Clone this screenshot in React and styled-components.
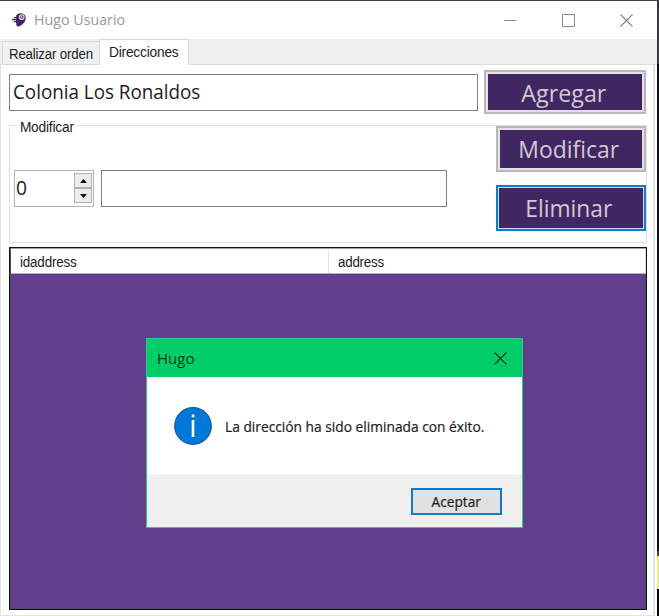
import React from "react";
import styled, { createGlobalStyle } from "styled-components";

const Global = createGlobalStyle`
  * { box-sizing: border-box; }
  html, body { margin: 0; padding: 0; background: #202024; overflow: hidden; }
`;

const ui = `"Open Sans", "Noto Sans", sans-serif`;
const classic = `"Liberation Sans", Arial, sans-serif`;

const Screen = styled.div`
  width: 659px;
  height: 616px;
  display: grid;
  grid-template-columns: 657px 2px;
  border-top: 1px solid #424044;
  overflow: hidden;
`;

const Backdrop = styled.div`
  background: linear-gradient(#38383c 0 63px, #111115 63px 550px, #4a4a38 550px 555px, #e9ee86 555px 588px, #050505 588px);
`;

const Window = styled.div`
  display: flex;
  flex-direction: column;
  background: #fff;
`;

const TitleBar = styled.header`
  height: 38px;
  display: flex;
  align-items: center;
  padding: 0 24px 0 11px;
`;

const Text = styled.span`
  display: block;
  white-space: nowrap;
  line-height: 1;
  font-family: ${(p) => (p.$classic ? classic : ui)};
  font-size: ${(p) => p.$size}px;
  letter-spacing: ${(p) => p.$track || 0}px;
  color: ${(p) => p.$color || "#1c1c1c"};
  transform: scaleX(${(p) => p.$fit || 1});
  transform-origin: ${(p) => (p.$center ? "center" : "left")};
`;

const Caption = styled(Text)`
  flex: 1;
  margin: -1px 0 0 7px;
`;

const Controls = styled.div`
  display: flex;
  gap: 45px;
`;

const TabStrip = styled.nav`
  height: 26px;
  flex: none;
  display: flex;
  align-items: flex-end;
  padding-left: 2px;
  background: #efefef;
  box-shadow: inset 0 -1px #dcdcdc;
`;

const Tab = styled.div`
  height: ${(p) => (p.$active ? 26 : 24)}px;
  width: ${(p) => (p.$active ? 90 : 97)}px;
  padding: ${(p) => (p.$active ? "5px 0 0 9px" : "5px 0 0 6px")};
  border: 1px solid #d9d9d9;
  border-bottom-color: ${(p) => (p.$active ? "#fff" : "#d9d9d9")};
  border-right-width: ${(p) => (p.$active ? 1 : 0)}px;
  background: ${(p) => (p.$active ? "#fff" : "#f0f0f0")};
`;

const Page = styled.main`
  height: 551px;
  margin-right: 2px;
  padding: 5px 6px 0 8px;
  border: solid #e2e2e2;
  border-width: 0 2px 1px 1px;
`;

const AddRow = styled.div`
  display: flex;
  align-items: center;
  justify-content: space-between;
  height: 44px;
  padding-right: 1px;
`;

const Field = styled.div`
  width: ${(p) => p.$width}px;
  height: ${(p) => p.$height}px;
  display: flex;
  align-items: center;
  padding: 0 0 1px 3px;
  border: 1px solid #7f7f7f;
  background: #fff;
`;

const PurpleButton = styled.button`
  width: ${(p) => p.$width}px;
  height: ${(p) => p.$height}px;
  display: flex;
  align-items: center;
  justify-content: center;
  padding: ${(p) => (p.$height === 46 ? "0 4px 1px 0" : "1px 3px 0 0")};
  border: 2px solid ${(p) => (p.$focused ? "#1079d3" : "#b9b7ba")};
  box-shadow: inset 0 0 0 ${(p) => (p.$focused ? "1px #d9d9ea" : "2px #e2e0e5")};
  background: #412664;
  border-radius: 0;
`;

const Group = styled.fieldset`
  height: 123px;
  width: 638px;
  margin: 6px 0 0;
  padding: 0 1px 0 4px;
  border: 1px solid #dfdfdf;
  border-top: 0;
  min-width: 0;
  display: flex;
  flex-direction: column;
  background: linear-gradient(#dfdfdf, #dfdfdf) 0 5px / 7px 1px no-repeat,
    linear-gradient(#dfdfdf, #dfdfdf) 67px 5px / 569px 1px no-repeat;
  clip-path: polygon(0 5px, 6px 5px, 6px 0, 80px 0, 80px 5px, 100% 5px, 100% 100%, 0 100%);
`;

const GroupBody = styled.div`
  display: grid;
  grid-template-columns: 80px 346px 150px;
  column-gap: 7px;
  width: 632px;
  padding-top: 6px;
  & > :last-child { margin-left: 42px; }
`;

const GroupTitle = styled(Text)`
  height: 0;
  padding-left: 6px;
`;

const Spinner = styled.div`
  width: 80px;
  height: 37px;
  margin-top: 44px;
  display: flex;
  align-items: center;
  justify-content: space-between;
  padding: 0 2px;
  border: 1px solid #b4b4b4;
`;

const SpinnerValue = styled(Text)`
  margin: -2px 0 0 -1px;
`;

const Steps = styled.div`
  width: 18px;
  display: grid;
  grid-template-rows: 15px 15px;
  margin: 0 -1px 1px 0;
`;

const Step = styled.div`
  display: grid;
  place-items: center;
  border: 1px solid #b0b0b0;
  background: #ededed;
`;

const Offset = styled.div`
  margin-top: 44px;
`;

const Stack = styled.div`
  display: flex;
  flex-direction: column;
  gap: 13px;
`;

const Table = styled.section`
  width: 638px;
  height: 363px;
  margin-top: 4px;
  border: 1px solid #111;
  background: #623f8d;
  box-shadow: inset 0 0 0 1px #55466b;
`;

const HeadRow = styled.div`
  display: grid;
  grid-template-columns: 318px 1fr;
  height: 26px;
  margin: 0 0 0 1px;
  border-top: 1px solid #a0a0a0;
  border-bottom: 1px solid #b5b0ba;
  background: #fff;
`;

const HeadCell = styled.div`
  display: flex;
  align-items: center;
  padding: 1px 0 0 9px;
  border-right: 1px solid #e3e3e3;
`;

const Dialog = styled.div`
  position: absolute;
  left: 146px;
  top: 338px;
  width: 377px;
  height: 190px;
  display: grid;
  grid-template-rows: 38px 97px 1fr;
  border: 1px solid #2fc888;
  background: #fff;
`;

const DialogTitle = styled.div`
  display: flex;
  align-items: center;
  justify-content: space-between;
  padding: 0 15px 0 10px;
  background: #02ce68;
`;

const DialogBody = styled.div`
  display: flex;
  align-items: center;
  gap: 13px;
  padding: 0 0 0 27px;
`;

const Message = styled(Text)`
  margin-top: 3px;
  -webkit-text-stroke: 0.2px #1c1c1c;
`;

const DialogFooter = styled.div`
  display: flex;
  justify-content: flex-end;
  align-items: center;
  padding: 2px 20px 0 0;
  background: #efefef;
`;

const Accept = styled.button`
  width: 91px;
  height: 27px;
  display: grid;
  place-items: center;
  padding: 0;
  border: 2px solid #1279cf;
  background: #e1e1e1;
`;

const AcceptLabel = styled(Text)`
  margin-top: 1px;
  -webkit-text-stroke: 0.2px #1c1c1c;
`;

const Cross = ({ color }) => (
  <svg width="13" height="13" viewBox="0 0 13 13" stroke={color} strokeWidth="1.1">
    <path d="M.5 .5 12.5 12.5M12.5 .5 .5 12.5" />
  </svg>
);

const Logo = () => (
  <svg width="16" height="16" viewBox="0 0 16 16">
    <path d="M5.2 3.6Q6.6 1.2 10 1.2 14.6 1.6 14.7 6 14.4 10.4 10.6 13 8.4 14.6 6.2 14.6 5 13 5 10Z" fill="#402562" />
    <path d="M2.6 5.7H5.6M1 7.6H5.6M2.8 9.6H5.6" stroke="#402562" strokeWidth="1.2" />
    <circle cx="10.7" cy="5.1" r="2.3" fill="#5c427b" stroke="#e4dcec" strokeWidth="1.1" />
    <circle cx="10.5" cy="5" r=".7" fill="#fff" />
  </svg>
);

const Arrow = ({ down }) => (
  <svg width="7" height="4" viewBox="0 0 7 4">
    <path d={down ? "M0 0H7L3.5 4Z" : "M0 4H7L3.5 0Z"} fill="#111" />
  </svg>
);

export default function App() {
  return (
    <>
      <Global />
      <Screen>
        <Window>
          <TitleBar>
            <Logo />
            <Caption $size={15} $fit={0.95} $color="#999">Hugo Usuario</Caption>
            <Controls>
              <svg width="13" height="13"><path d="M0 6.5H12" stroke="#8a8a8a" /></svg>
              <svg width="13" height="13"><path d="M.5 .5H12.5V12.5H.5Z" fill="none" stroke="#8a8a8a" /></svg>
              <Cross color="#858585" />
            </Controls>
          </TitleBar>
          <TabStrip>
            <Tab><Text $classic $size={14} $track={-0.2} $fit={0.95}>Realizar orden</Text></Tab>
            <Tab $active><Text $classic $size={14} $track={-0.2} $fit={0.98}>Direcciones</Text></Tab>
          </TabStrip>
          <Page>
            <AddRow>
              <Field $width={469} $height={37}><Text $size={20} $fit={0.94}>Colonia Los Ronaldos</Text></Field>
              <PurpleButton $width={162} $height={44}><Text $center $size={24} $fit={0.97} $color="#d3cad1">Agregar</Text></PurpleButton>
            </AddRow>
            <Group>
              <GroupTitle $classic $size={14} $track={-0.2} $fit={0.98}>Modificar</GroupTitle>
              <GroupBody>
                <Spinner>
                  <SpinnerValue $size={20} $fit={0.96}>0</SpinnerValue>
                  <Steps><Step><Arrow /></Step><Step><Arrow down /></Step></Steps>
                </Spinner>
                <Offset><Field $width={346} $height={37} /></Offset>
                <Stack>
                  <PurpleButton $width={150} $height={46}><Text $center $size={24} $fit={0.955} $color="#d3cad1">Modificar</Text></PurpleButton>
                  <PurpleButton $width={150} $height={46} $focused><Text $center $size={24} $fit={0.95} $color="#d3cad1">Eliminar</Text></PurpleButton>
                </Stack>
              </GroupBody>
            </Group>
            <Table>
              <HeadRow>
                <HeadCell><Text $classic $size={14} $track={-0.2} $fit={0.96}>idaddress</Text></HeadCell>
                <HeadCell><Text $classic $size={14} $track={-0.2} $fit={0.95}>address</Text></HeadCell>
              </HeadRow>
            </Table>
          </Page>
        </Window>
        <Backdrop />
      </Screen>
      <Dialog>
        <DialogTitle><Text $size={15} $color="#06351d">Hugo</Text><Cross color="#06301a" /></DialogTitle>
        <DialogBody>
          <svg width="38" height="38" viewBox="0 0 38 38">
            <circle cx="19" cy="19" r="18.3" fill="#0078d7" stroke="#135f9f" strokeWidth="1.2" />
            <path d="M19 13V30M19 7.5V10.3" stroke="#fff" strokeWidth="2.6" />
          </svg>
          <Message $size={14} $fit={0.983}>La dirección ha sido eliminada con éxito.</Message>
        </DialogBody>
        <DialogFooter><Accept><AcceptLabel $center $size={14} $fit={0.98}>Aceptar</AcceptLabel></Accept></DialogFooter>
      </Dialog>
    </>
  );
}
